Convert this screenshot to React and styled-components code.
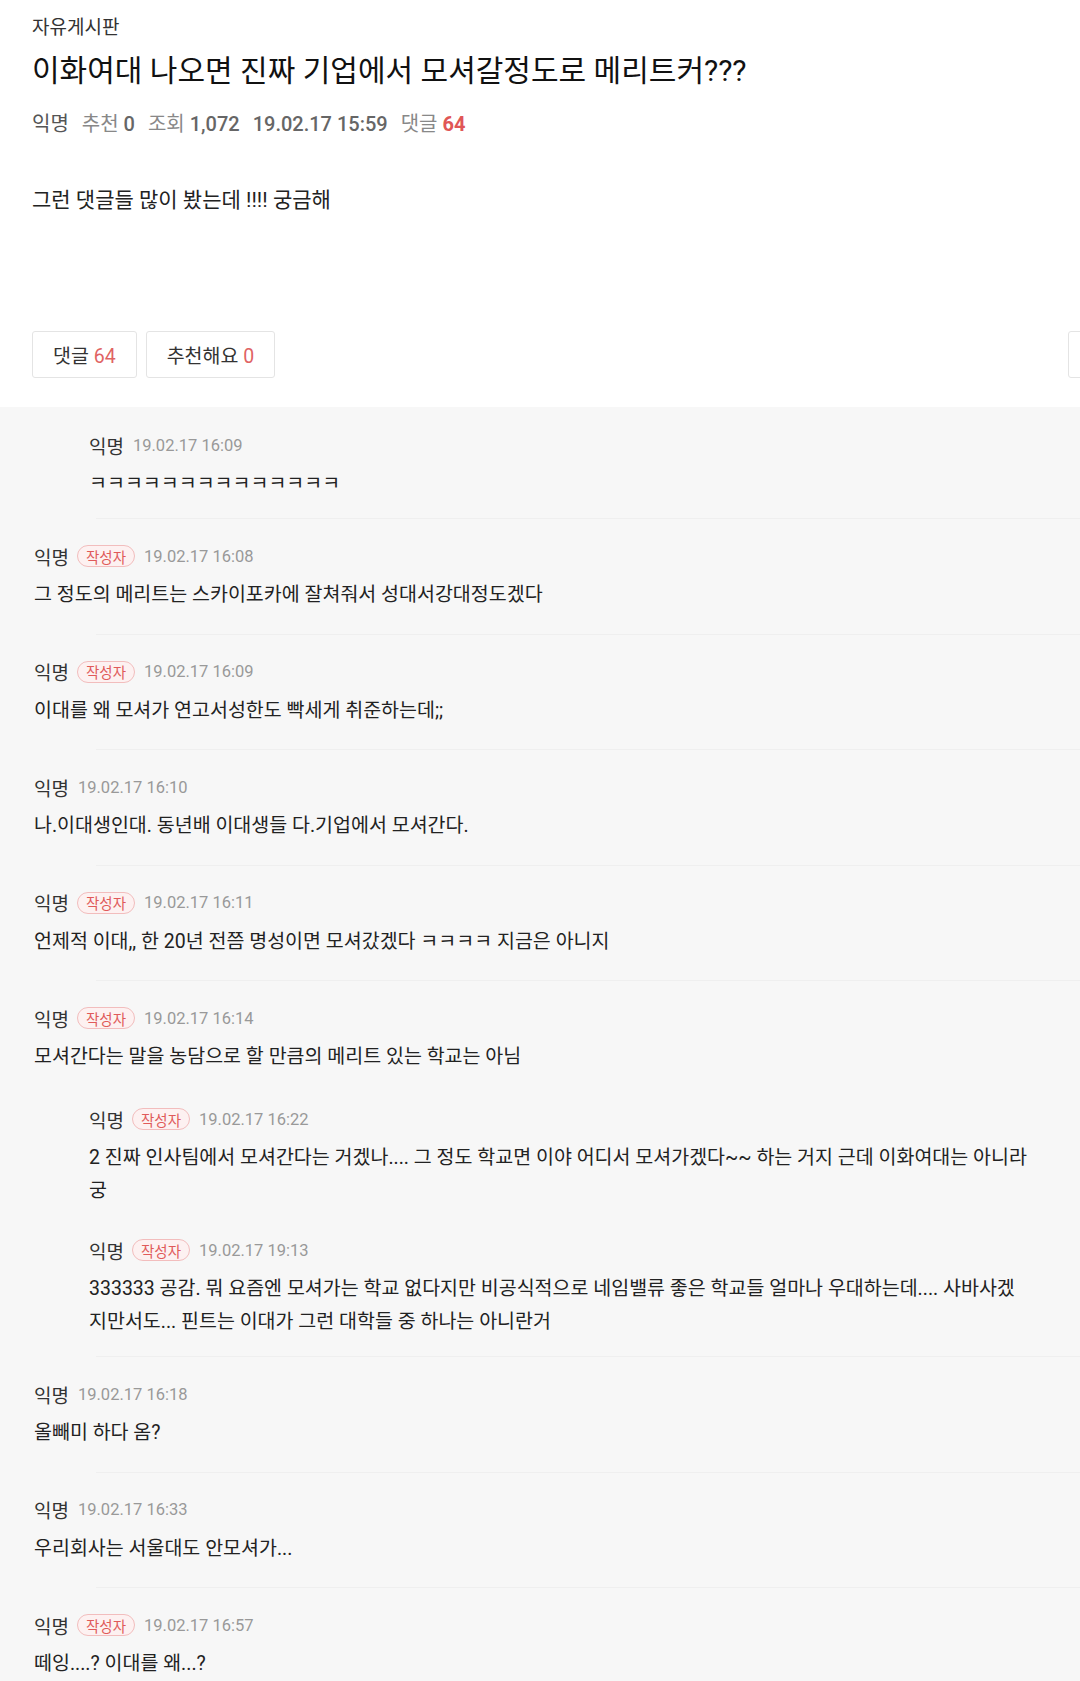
import React from 'react'
import styled, { createGlobalStyle } from 'styled-components'

const GlobalStyle = createGlobalStyle`
    html, body {
        margin: 0;
        padding: 0;
        background: #fff;
        overflow-x: hidden;
    }
    body {
        font-family: Roboto, "Noto Sans CJK KR", "Noto Sans", sans-serif;
        color: #222;
    }
`

const post = {
    board: '자유게시판',
    title: '이화여대 나오면 진짜 기업에서 모셔갈정도로 메리트커???',
    author: '익명',
    likes: 0,
    views: '1,072',
    date: '19.02.17 15:59',
    comments: 64,
    body: '그런 댓글들 많이 봤는데 !!!! 궁금해',
}

// each thread = optional top comment + replies under it
const threads = [
    { replies: [{ writer: false, date: '19.02.17 16:09', text: 'ㅋㅋㅋㅋㅋㅋㅋㅋㅋㅋㅋㅋㅋㅋ' }] },
    { writer: true, date: '19.02.17 16:08', text: '그 정도의 메리트는 스카이포카에 잘쳐줘서 성대서강대정도겠다' },
    { writer: true, date: '19.02.17 16:09', text: '이대를 왜 모셔가 연고서성한도 빡세게 취준하는데;;' },
    { writer: false, date: '19.02.17 16:10', text: '나.이대생인대. 동년배 이대생들 다.기업에서 모셔간다.' },
    { writer: true, date: '19.02.17 16:11', text: '언제적 이대,, 한 20년 전쯤 명성이면 모셔갔겠다 ㅋㅋㅋㅋ 지금은 아니지' },
    {
        writer: true,
        date: '19.02.17 16:14',
        text: '모셔간다는 말을 농담으로 할 만큼의 메리트 있는 학교는 아님',
        replies: [
            { writer: true, date: '19.02.17 16:22', text: '2 진짜 인사팀에서 모셔간다는 거겠나.... 그 정도 학교면 이야 어디서 모셔가겠다~~ 하는 거지 근데 이화여대는 아니라궁' },
            { writer: true, date: '19.02.17 19:13', text: '333333 공감. 뭐 요즘엔 모셔가는 학교 없다지만 비공식적으로 네임밸류 좋은 학교들 얼마나 우대하는데.... 사바사겠지만서도... 핀트는 이대가 그런 대학들 중 하나는 아니란거' },
        ],
    },
    { writer: false, date: '19.02.17 16:18', text: '올빼미 하다 옴?' },
    { writer: false, date: '19.02.17 16:33', text: '우리회사는 서울대도 안모셔가...' },
    { writer: true, date: '19.02.17 16:57', text: '떼잉....? 이대를 왜...?' },
]

function Comment({ c }) {
    return (
        <>
            <CommentHead>
                <Name>익명</Name>
                {c.writer && <Badge>작성자</Badge>}
                <Time>{c.date}</Time>
            </CommentHead>
            <CommentText>{c.text}</CommentText>
        </>
    )
}

export default function App() {
    return (
        <Page>
            <GlobalStyle />
            <Article>
                <Board>{post.board}</Board>
                <Title>{post.title}</Title>
                <Meta>
                    <span>{post.author}</span>
                    <span>추천 <b>{post.likes}</b></span>
                    <span>조회 <b>{post.views}</b></span>
                    <b>{post.date}</b>
                    <span>댓글 <Red>{post.comments}</Red></span>
                </Meta>
                <Body>{post.body}</Body>
                <Actions>
                    <ActionButton>댓글 <Count>{post.comments}</Count></ActionButton>
                    <ActionButton>추천해요 <Count>{post.likes}</Count></ActionButton>
                    <ShareButton />
                </Actions>
            </Article>
            <CommentList>
                {threads.map((t, i) => (
                    <Thread key={i} $onlyReplies={!t.text} $endsInReplies={!!t.replies}>
                        {t.text && <Comment c={t} />}
                        {t.replies && (
                            <Replies $nested={!!t.text}>
                                {t.replies.map((r, j) => (
                                    <Reply key={j}>
                                        <Comment c={r} />
                                    </Reply>
                                ))}
                            </Replies>
                        )}
                    </Thread>
                ))}
            </CommentList>
        </Page>
    )
}

const Page = styled.div`
    width: 1080px;
    min-height: 1681px;
    background: #f7f7f7;
    overflow: hidden;
`

const Article = styled.div`
    background: #fff;
    padding: 16px 32px 29px;
`

const Board = styled.div`
    font-size: 19px;
    line-height: 24px;
    color: #333;
`

const Title = styled.h1`
    margin: 11px 0 0;
    font-size: 30px;
    line-height: 40px;
    font-weight: 400;
    color: #111;
`

const Meta = styled.div`
    margin-top: 20px;
    display: flex;
    gap: 13px;
    font-size: 20px;
    line-height: 26px;
    color: #888;

    span:first-child {
        color: #555;
    }

    b {
        font-weight: 500;
        color: #666;
    }
`

const Red = styled.b`
    && {
        color: #e05656;
        font-weight: 700;
    }
`

const Body = styled.div`
    margin-top: 49px;
    min-height: 145px;
    font-size: 21px;
    line-height: 28px;
    color: #222;
`

const Actions = styled.div`
    display: flex;
    gap: 9px;
`

const ActionButton = styled.button`
    height: 47px;
    padding: 0 20px;
    background: #fff;
    border: 1px solid #e4e4e4;
    border-radius: 3px;
    font-family: inherit;
    font-size: 19.5px;
    color: #333;
`

const Count = styled.span`
    color: #e06363;
`

const ShareButton = styled(ActionButton)`
    margin-left: auto;
    margin-right: -80px;
    width: 60px;
`

const CommentList = styled.div`
    padding-left: 34px;
`

const Thread = styled.div`
    padding-top: ${p => (p.$onlyReplies ? '26px' : '25px')};

    &::after {
        content: '';
        display: block;
        height: 1px;
        margin-top: ${p => (p.$endsInReplies ? '18px' : '22.5px')};
        margin-left: 62px;
        background: #efefef;
    }
`

const Replies = styled.div`
    display: flex;
    flex-direction: column;
    gap: 31px;
    padding-left: 55px;
    padding-right: 50px;
    margin-top: ${p => (p.$nested ? '34px' : '0')};
`

const Reply = styled.div``

const CommentHead = styled.div`
    display: flex;
    align-items: center;
    height: 24px;
`

const Name = styled.span`
    font-size: 19px;
    color: #333;
`

const Badge = styled.span`
    margin-left: 8px;
    height: 22px;
    padding: 0 8px;
    display: inline-flex;
    align-items: center;
    border: 1px solid #f2bdbd;
    border-radius: 11px;
    background: #fdf1f1;
    font-size: 14.5px;
    color: #e05a5a;
    box-sizing: border-box;
`

const Time = styled.span`
    margin-left: 9px;
    font-size: 16.5px;
    color: #999;
`

const CommentText = styled.div`
    margin-top: 10px;
    font-size: 19.5px;
    line-height: 33px;
    color: #222;
`
